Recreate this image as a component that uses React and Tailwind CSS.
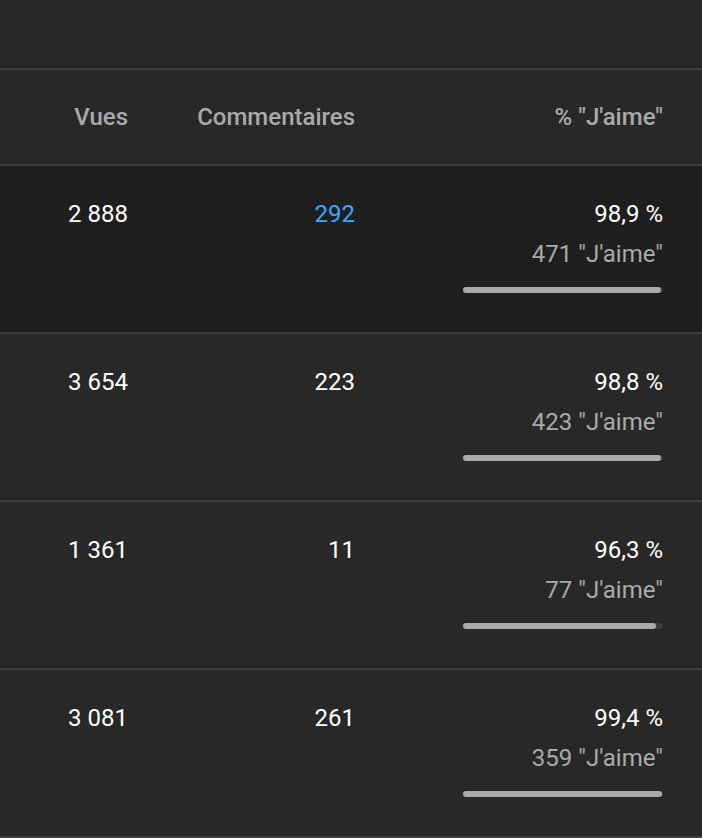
import React from 'react';

const rows = [
  { vues: '2\u00A0888', comments: '292', pct: '98,9 %', likes: '471 "J\'aime"', fill: 98.9, active: true },
  { vues: '3\u00A0654', comments: '223', pct: '98,8 %', likes: '423 "J\'aime"', fill: 98.8 },
  { vues: '1\u00A0361', comments: '11', pct: '96,3 %', likes: '77 "J\'aime"', fill: 96.3 },
  { vues: '3\u00A0081', comments: '261', pct: '99,4 %', likes: '359 "J\'aime"', fill: 99.4 },
];

function Row({ row }) {
  return (
    <div className={`flex h-[168px] border-b-2 border-[#3d3d3d] pt-[28px] ${row.active ? 'bg-[#1f1f1f]' : ''}`}>
      <div className="w-[128px] text-right leading-[40px] text-white">{row.vues}</div>
      <div className={`w-[227px] text-right leading-[40px] ${row.active ? 'text-[#3ea6ff]' : 'text-white'}`}>
        {row.comments}
      </div>
      <div className="flex flex-1 flex-col items-end pr-[39px]">
        <div className="leading-[40px] text-white">{row.pct}</div>
        <div className="leading-[40px] text-[#aaaaaa]">{row.likes}</div>
        <div className="mt-[13px] h-[6px] w-[200px] rounded-full bg-[#3d3d3d]">
          <div className="h-full rounded-full bg-[#aaaaaa]" style={{ width: `${row.fill}%` }} />
        </div>
      </div>
    </div>
  );
}

export default function App() {
  return (
    <div className="min-h-[838px] w-[702px] bg-[#282828] text-[24px] font-['Roboto',sans-serif]">
      <div className="h-[70px] border-b-2 border-[#3d3d3d]" />
      <div className="flex h-[96px] border-b-2 border-[#3d3d3d] pt-[27px] font-medium text-[#aaaaaa]">
        <div className="w-[128px] text-right leading-[40px]">Vues</div>
        <div className="w-[227px] text-right leading-[40px]">Commentaires</div>
        <div className="flex-1 pr-[39px] text-right leading-[40px]">% "J'aime"</div>
      </div>
      {rows.map((row, i) => (
        <Row key={i} row={row} />
      ))}
    </div>
  );
}
